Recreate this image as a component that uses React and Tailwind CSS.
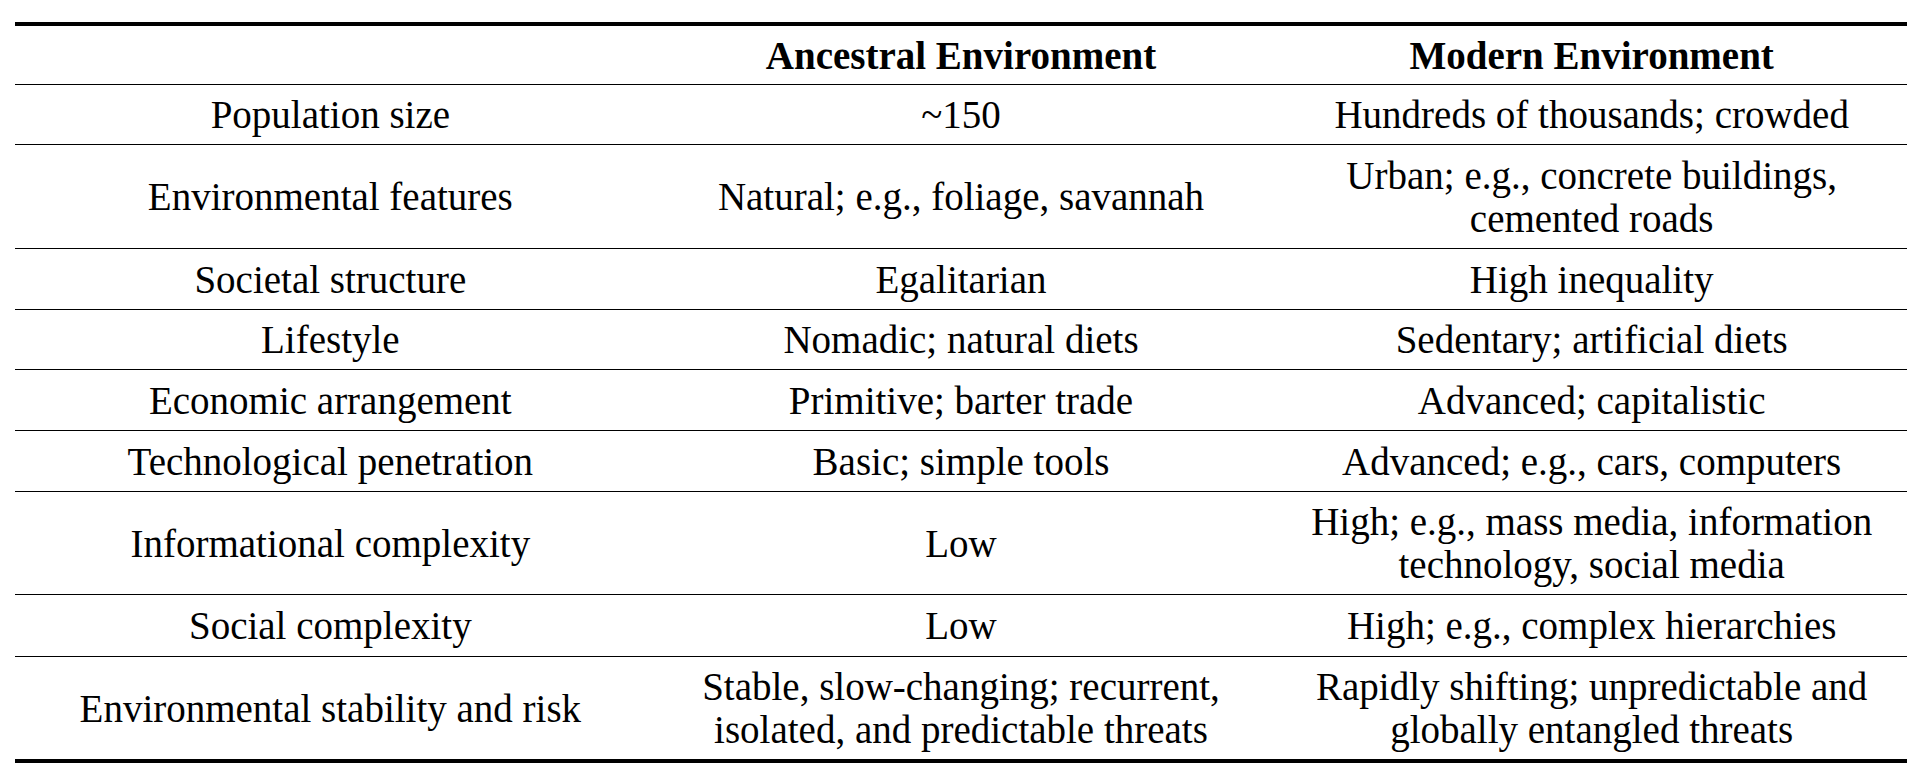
import React from 'react';

const rows = [
  { h: 'h-[60px]', label: 'Population size', ancestral: ['~150'], modern: ['Hundreds of thousands; crowded'] },
  {
    h: 'h-[104px]',
    label: 'Environmental features',
    ancestral: ['Natural; e.g., foliage, savannah'],
    modern: ['Urban; e.g., concrete buildings,', 'cemented roads'],
  },
  { h: 'h-[61px]', label: 'Societal structure', ancestral: ['Egalitarian'], modern: ['High inequality'] },
  { h: 'h-[60px]', label: 'Lifestyle', ancestral: ['Nomadic; natural diets'], modern: ['Sedentary; artificial diets'] },
  { h: 'h-[61px]', label: 'Economic arrangement', ancestral: ['Primitive; barter trade'], modern: ['Advanced; capitalistic'] },
  {
    h: 'h-[61px]',
    label: 'Technological penetration',
    ancestral: ['Basic; simple tools'],
    modern: ['Advanced; e.g., cars, computers'],
  },
  {
    h: 'h-[103px]',
    label: 'Informational complexity',
    ancestral: ['Low'],
    modern: ['High; e.g., mass media, information', 'technology, social media'],
  },
  { h: 'h-[62px]', label: 'Social complexity', ancestral: ['Low'], modern: ['High; e.g., complex hierarchies'] },
  {
    h: 'h-[102px]',
    label: 'Environmental stability and risk',
    ancestral: ['Stable, slow-changing; recurrent,', 'isolated, and predictable threats'],
    modern: ['Rapidly shifting; unpredictable and', 'globally entangled threats'],
  },
];

const Cell = ({ lines, bold }) => (
  <div className={`flex items-center justify-center text-center ${bold ? 'font-bold' : ''}`}>
    <div>
      {lines.map((line, i) => (
        <div key={i} className="whitespace-nowrap">
          {line}
        </div>
      ))}
    </div>
  </div>
);

const App = () => {
  return (
    <div className="w-full h-[783px] bg-white pt-[22px] pl-[15px] pr-[13px] font-['Liberation_Serif',serif] text-[39px] leading-[43px] text-black">
      <div className="border-t-4 border-b-4 border-black">
        {/* header */}
        <div className="grid grid-cols-3 h-[59px] border-b border-black">
          <div />
          <Cell lines={['Ancestral Environment']} bold />
          <Cell lines={['Modern Environment']} bold />
        </div>
        {rows.map((row, idx) => (
          <div
            key={row.label}
            className={`grid grid-cols-3 ${row.h} ${idx < rows.length - 1 ? 'border-b border-black' : ''}`}
          >
            <Cell lines={[row.label]} />
            <Cell lines={row.ancestral} />
            <Cell lines={row.modern} />
          </div>
        ))}
      </div>
    </div>
  );
};

export default App;
